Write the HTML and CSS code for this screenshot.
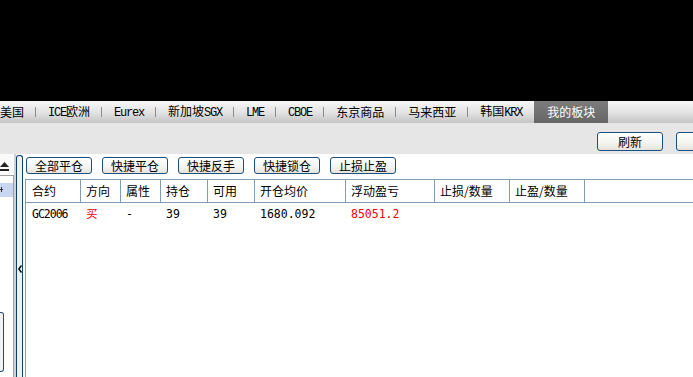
FILE: index.html
```html
<!DOCTYPE html>
<html lang="zh-CN">
<head>
    <meta charset="UTF-8">
    <meta name="viewport" content="width=device-width, initial-scale=1.0">
    <title>持仓</title>
    <link rel="stylesheet" href="styles.css">
</head>
<body>
    <div class="top"></div>

    <div class="tabs">
        <span class="tab first">美国</span><span class="sep"></span>
        <span class="tab"><span class="lat">ICE</span>欧洲</span><span class="sep"></span>
        <span class="tab"><span class="lat">Eurex</span></span><span class="sep"></span>
        <span class="tab">新加坡<span class="lat">SGX</span></span><span class="sep"></span>
        <span class="tab"><span class="lat">LME</span></span><span class="sep"></span>
        <span class="tab"><span class="lat">CBOE</span></span><span class="sep"></span>
        <span class="tab">东京商品</span><span class="sep"></span>
        <span class="tab">马来西亚</span><span class="sep"></span>
        <span class="tab">韩国<span class="lat">KRX</span></span>
        <span class="tab active">我的板块</span>
    </div>

    <div class="toolbar">
        <button class="tool-btn">刷新</button>
        <button class="tool-btn last"></button>
    </div>

    <div class="main">
        <div class="side">
            <div class="side-head">
                <svg width="9" height="9" viewBox="0 0 9 9"><polygon points="0,5 4.5,0 9,5" fill="#222"/><rect x="0" y="7" width="9" height="2" fill="#222"/></svg>
            </div>
            <div class="side-box">
                <div class="sel">
                    <svg width="4" height="14" viewBox="0 0 4 14"><rect x="0" y="6" width="3" height="1" fill="#333"/><rect x="1" y="4" width="1" height="5" fill="#333"/></svg>
                </div>
                <div class="side-btn"></div>
            </div>
        </div>

        <div class="splitter">
            <div class="split-bar">
                <svg width="4" height="8" viewBox="0 0 4 8"><polyline points="3.5,0.5 0.8,4 3.5,7.5" fill="none" stroke="#000" stroke-width="1.4"/></svg>
            </div>
        </div>

        <div class="content">
            <div class="actions">
                <button class="act-btn">全部平仓</button>
                <button class="act-btn">快捷平仓</button>
                <button class="act-btn">快捷反手</button>
                <button class="act-btn">快捷锁仓</button>
                <button class="act-btn">止损止盈</button>
            </div>
            <div class="grid">
                <div class="row head">
                    <div class="cell">合约</div>
                    <div class="cell">方向</div>
                    <div class="cell">属性</div>
                    <div class="cell">持仓</div>
                    <div class="cell">可用</div>
                    <div class="cell">开仓均价</div>
                    <div class="cell">浮动盈亏</div>
                    <div class="cell">止损/数量</div>
                    <div class="cell">止盈/数量</div>
                    <div class="cell end"></div>
                </div>
                <div class="row data">
                    <div class="cell code">GC2006</div>
                    <div class="cell red">买</div>
                    <div class="cell">-</div>
                    <div class="cell">39</div>
                    <div class="cell">39</div>
                    <div class="cell">1680.092</div>
                    <div class="cell red">85051.2</div>
                    <div class="cell"></div>
                    <div class="cell"></div>
                    <div class="cell"></div>
                </div>
            </div>
        </div>
    </div>
</body>
</html>
```

FILE: styles.css
```css
body {
    margin: 0;
    width: 693px;
    height: 377px;
    overflow: hidden;
    background: #ffffff;
    font-family: "Noto Sans CJK SC", sans-serif;
    font-size: 12px;
    color: #000000;
}
.top {
    height: 101px;
    background: #000000;
}
.tabs {
    display: flex;
    align-items: center;
    height: 22px;
    background: linear-gradient(#f7f7f7, #e4e4e4 50%, #c4c4c4);
    white-space: nowrap;
}
.tab {
    line-height: 22px;
    padding: 0 11px 0 12px;
}
.tab.first {
    padding-left: 0;
}
.tab.active {
    padding: 0 13px;
    margin-left: 1px;
    color: #ffffff;
    background: linear-gradient(#7c7c7c, #666666);
}
.lat {
    font-family: "Liberation Mono", monospace;
    letter-spacing: -1.2px;
}
.sep {
    width: 1px;
    height: 10px;
    background: #8c8c8c;
}
.toolbar {
    display: flex;
    justify-content: flex-end;
    height: 31px;
    box-sizing: border-box;
    padding-top: 9px;
    background: #e6e6e6;
    overflow: hidden;
}
.tool-btn, .act-btn {
    font-family: "Noto Sans CJK SC", sans-serif;
    font-size: 12px;
    color: #000000;
    border: 1px solid #1c4e80;
    border-radius: 3px;
    background: linear-gradient(#ffffff, #f4f4f0 60%, #e4e3dc);
    padding: 0;
    box-sizing: border-box;
}
.tool-btn {
    width: 66px;
    height: 19px;
    line-height: 17px;
    margin-left: 13px;
}
.tool-btn.last {
    margin-right: -49px;
}
.main {
    display: flex;
    height: 223px;
}
.side {
    width: 14px;
    display: flex;
    flex-direction: column;
}
.side-head {
    height: 21px;
    box-sizing: border-box;
    padding-top: 8px;
    background: #fafafa;
}
.side-head svg {
    display: block;
}
.side-box {
    flex: 1;
    border-top: 1px solid #a0a0a0;
    border-right: 1px solid #a0a0a0;
    background: #ffffff;
}
.sel {
    height: 14px;
    margin-top: 7px;
    background: #c7d7f1;
}
.sel svg {
    display: block;
}
.side-btn {
    width: 4px;
    height: 60px;
    margin-top: 115px;
    box-sizing: border-box;
    border: 1px solid #1c4e80;
    border-left: none;
    border-radius: 0 3px 3px 0;
    background: #f3f2ec;
}
.splitter {
    width: 11px;
    box-sizing: border-box;
    padding: 1px 2px 0;
    display: flex;
    background: linear-gradient(to right, #d2d2d2 2px, #ffffff 2px);
}
.split-bar {
    flex: 1;
    display: flex;
    align-items: center;
    justify-content: center;
    padding-top: 4px;
    border: 1px solid #0d3f7a;
    border-bottom: none;
    border-radius: 3px 3px 0 0;
    background: #f3f1e7;
}
.split-bar svg {
    display: block;
}
.content {
    flex: 1;
    display: flex;
    flex-direction: column;
}
.actions {
    display: flex;
    gap: 10px;
    height: 25px;
    box-sizing: border-box;
    padding: 3px 0 0 1px;
}
.act-btn {
    width: 66px;
    height: 17px;
    line-height: 15px;
}
.grid {
    flex: 1;
    border-left: 1px solid #7f9db9;
    background: #ffffff;
}
.row {
    display: grid;
    grid-template-columns: 55px 40px 40px 47px 47px 91px 89px 75px 75px 1fr;
}
.head {
    height: 24px;
    box-sizing: border-box;
    border-top: 1px solid #7f9db9;
    border-bottom: 1px solid #7f9db9;
}
.head .cell {
    line-height: 22px;
    padding-left: 5px;
    border-right: 1px solid #7f9db9;
    white-space: nowrap;
}
.head .cell:first-child {
    padding-left: 6px;
}
.head .cell.end {
    border-right: none;
}
.data .cell {
    height: 22px;
    line-height: 22px;
    padding-left: 5px;
    font-family: "DejaVu Sans Mono", "Noto Sans CJK SC", monospace;
    font-size: 11.5px;
    white-space: nowrap;
}
.data .cell.code {
    padding-left: 6px;
    letter-spacing: -1px;
}
.red {
    color: #ff0000;
}
```
